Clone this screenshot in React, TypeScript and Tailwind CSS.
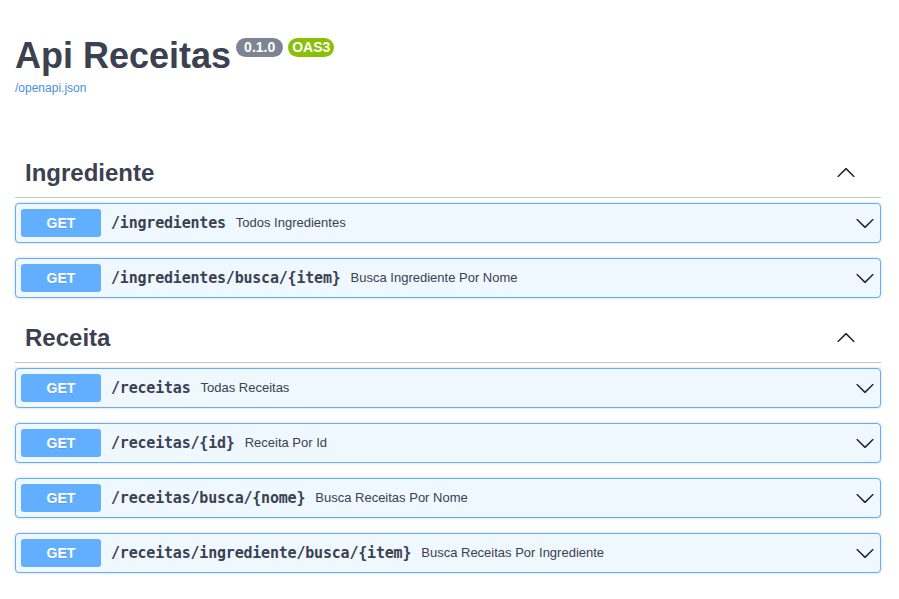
const sections = [
  {
    name: "Ingrediente",
    ops: [
      { path: "/ingredientes", summary: "Todos Ingredientes" },
      { path: "/ingredientes/busca/{item}", summary: "Busca Ingrediente Por Nome" },
    ],
  },
  {
    name: "Receita",
    ops: [
      { path: "/receitas", summary: "Todas Receitas" },
      { path: "/receitas/{id}", summary: "Receita Por Id" },
      { path: "/receitas/busca/{nome}", summary: "Busca Receitas Por Nome" },
      { path: "/receitas/ingrediente/busca/{item}", summary: "Busca Receitas Por Ingrediente" },
    ],
  },
]

function Arrow({ up }: { up?: boolean }) {
  return (
    <svg width="20" height="20" viewBox="0 0 20 20" className={up ? "rotate-180" : ""} fill="#222">
      <path d="M17.418 6.109c.272-.268.709-.268.979 0s.271.701 0 .969l-7.908 7.83c-.27.268-.707.268-.979 0l-7.908-7.83c-.27-.268-.27-.701 0-.969.271-.268.709-.268.979 0L10 13.25l7.418-7.141z" />
    </svg>
  )
}

function Operation({ path, summary }: { path: string; summary: string }) {
  return (
    <div className="mb-[15px] flex h-[40px] items-center rounded-[4px] border border-[#61affe] bg-[#eff7ff] px-[5px] shadow-[0_0_3px_rgba(0,0,0,0.19)]">
      <div className="flex h-[28px] w-[80px] items-center justify-center rounded-[3px] bg-[#61affe] text-[14px] font-bold text-white [text-shadow:0_1px_0_rgba(0,0,0,0.1)]">
        GET
      </div>
      <span className="px-[10px] font-['DejaVu_Sans_Mono',monospace] text-[15px] font-bold tracking-[-0.2px] text-[#3b4151]">
        {path}
      </span>
      <span className="flex-1 text-[13px] text-[#3b4151]">{summary}</span>
      <Arrow />
    </div>
  )
}

export default function App() {
  return (
    <div className="min-h-[599px] bg-white pl-[15px] pr-[18px] font-['Liberation_Sans',Arial,sans-serif] text-[#3b4151]">
      {/* Info */}
      <div className="pt-[35px]">
        <div className="flex items-start">
          <h2 className="text-[36px] font-bold leading-[41px]">Api Receitas</h2>
          <div className="ml-[5px] mt-[3px] flex gap-[5px]">
            <span className="rounded-full bg-[#7d8492] px-[8px] text-[14px] font-bold leading-[19px] text-white">0.1.0</span>
            <span className="rounded-full bg-[#89bf04] px-[4px] text-[14px] font-bold leading-[19px] text-white">OAS3</span>
          </div>
        </div>
        <a className="mt-[5px] block text-[12px] leading-[14px] text-[#4990e2]">/openapi.json</a>
      </div>

      <div className="pt-[53px]">
        {sections.map((s) => (
          <div key={s.name}>
            <div className="mb-[5px] flex h-[50px] items-center border-b border-[#c4c6cb] pl-[10px] pr-[25px]">
              <h3 className="flex-1 text-[24px] font-bold">{s.name}</h3>
              <Arrow up />
            </div>
            {s.ops.map((o) => (
              <Operation key={o.path} {...o} />
            ))}
          </div>
        ))}
      </div>
    </div>
  )
}
